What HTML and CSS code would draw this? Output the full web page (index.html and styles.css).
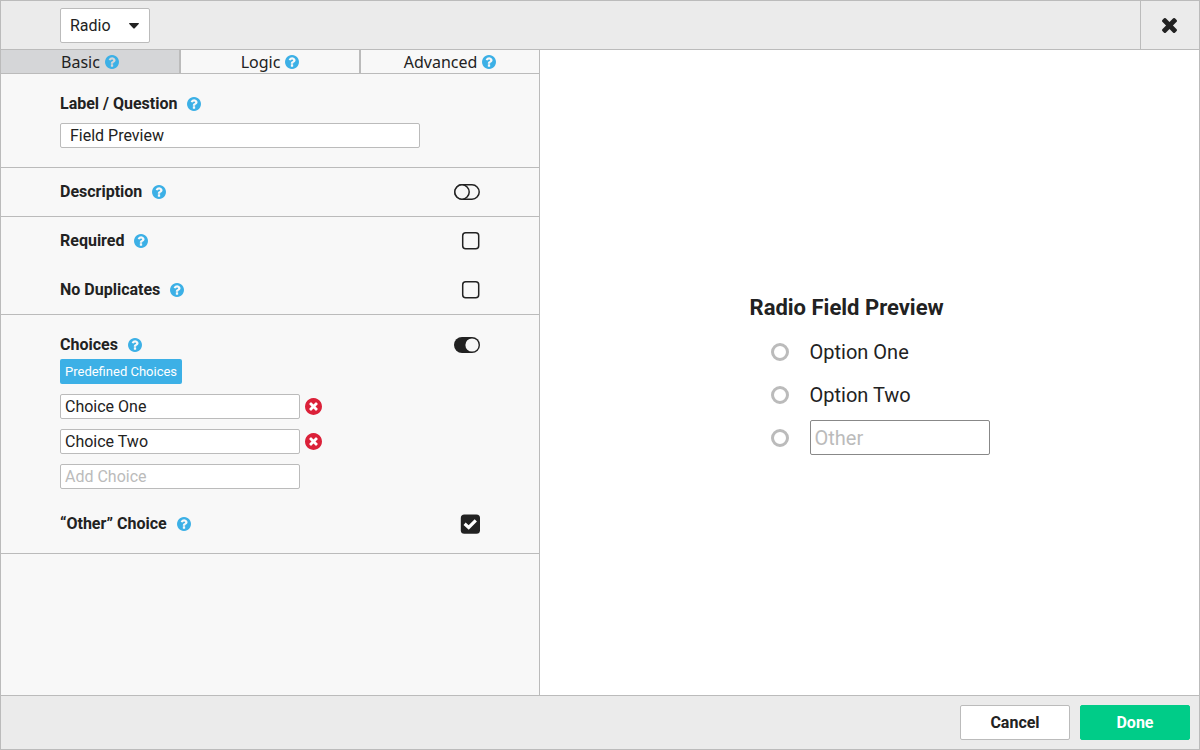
FILE: index.html
```
<!DOCTYPE html>
<html lang="en">
<head>
<meta charset="utf-8">
<title>Edit Field</title>
<meta name="viewport" content="width=device-width, initial-scale=1">
<link rel="stylesheet" href="styles.css">
</head>
<body>
<svg class="sprite" aria-hidden="true">
  <symbol id="i-help" viewBox="128 128 1536 1536"><path d="M1024 1376v-192q0-14-9-23t-23-9h-192q-14 0-23 9t-9 23v192q0 14 9 23t23 9h192q14 0 23-9t9-23zm256-672q0-88-55.5-163t-138.5-116-170-41q-243 0-371 213-15 24 8 42l132 100q7 6 19 6 16 0 25-12 53-68 86-92 34-24 86-24 48 0 85.5 26t37.5 59q0 38-20 61t-68 45q-63 28-115.5 86.5t-52.5 125.5v36q0 14 9 23t23 9h192q14 0 23-9t9-23q0-19 21.5-49.5t54.5-49.5q32-18 49-28.5t46-35 44.5-48 28-60.5 12.5-81zm384 192q0 209-103 385.5t-279.5 279.5-385.5 103-385.5-103-279.5-279.5-103-385.5 103-385.5 279.5-279.5 385.5-103 385.5 103 279.5 279.5 103 385.5z"/></symbol>
  <symbol id="i-times" viewBox="302 302 1188 1188"><path transform="translate(0 -64)" d="M1490 1322q0 40-28 68l-136 136q-28 28-68 28t-68-28l-294-294-294 294q-28 28-68 28t-68-28l-136-136q-28-28-28-68t28-68l294-294-294-294q-28-28-28-68t28-68l136-136q28-28 68-28t68 28l294 294 294-294q28-28 68-28t68 28l136 136q28 28 28 68t-28 68l-294 294 294 294q28 28 28 68z"/></symbol>
  <symbol id="i-remove" viewBox="128 128 1536 1536"><circle cx="896" cy="896" r="740" fill="#fff"/><path d="M1277 1122q0-26-19-45l-181-181 181-181q19-19 19-45 0-27-19-46l-90-90q-19-19-46-19-26 0-45 19l-181 181-181-181q-19-19-45-19-27 0-46 19l-90 90q-19 19-19 46 0 26 19 45l181 181-181 181q-19 19-19 45 0 27 19 46l90 90q19 19 46 19 26 0 45-19l181-181 181 181q19 19 45 19 27 0 46-19l90-90q19-19 19-46zm387-226q0 209-103 385.5t-279.5 279.5-385.5 103-385.5-103-279.5-279.5-103-385.5 103-385.5 279.5-279.5 385.5-103 385.5 103 279.5 279.5 103 385.5z"/></symbol>
</svg>
<div class="app">
  <header class="topbar">
    <div class="type">
      <select class="type-select" aria-label="Field type"><option>Radio</option><option>Select</option><option>Text</option></select>
      <svg class="type-caret" viewBox="0 0 10 6" aria-hidden="true"><path d="M.6 0h8.8q.9.300.3 1L5.500 5.400q-.500.400-1 0L.300 1Q-.300.300.6 0z"/></svg>
    </div>
    <button class="close" type="button" aria-label="Close"><svg class="close-icon"><use href="#i-times"/></svg></button>
  </header>

  <main class="body">
    <div class="panel">
      <nav class="tabs" role="tablist">
        <button class="tab tab-active" type="button" role="tab" aria-selected="true">Basic<svg class="help-icon"><use href="#i-help"/></svg></button>
        <button class="tab" type="button" role="tab" aria-selected="false">Logic<svg class="help-icon"><use href="#i-help"/></svg></button>
        <button class="tab" type="button" role="tab" aria-selected="false">Advanced<svg class="help-icon"><use href="#i-help"/></svg></button>
      </nav>

      <section class="section section-padded">
        <div class="row">
          <label class="label" for="question">Label / Question</label>
          <button class="help" type="button" aria-label="About label"><svg class="help-icon"><use href="#i-help"/></svg></button>
        </div>
        <input class="text text-question" id="question" type="text" value="Field Preview">
      </section>

      <section class="section">
        <div class="row row-tall">
          <label class="label" for="description">Description</label>
          <button class="help" type="button" aria-label="About description"><svg class="help-icon"><use href="#i-help"/></svg></button>
          <span class="control">
            <input class="toggle" id="description" type="checkbox">
            <svg class="toggle-art" viewBox="0 0 26 16"><rect x=".8" y=".8" width="24.400" height="14.400" rx="7.200" fill="none" stroke="#222" stroke-width="1.500"/><circle cx="8" cy="8" r="7.200" fill="#f8f8f8" stroke="#222" stroke-width="1.500"/></svg>
          </span>
        </div>
      </section>

      <section class="section">
        <div class="row row-tall">
          <label class="label" for="required">Required</label>
          <button class="help" type="button" aria-label="About required"><svg class="help-icon"><use href="#i-help"/></svg></button>
          <span class="control">
            <input class="check" id="required" type="checkbox">
            <svg class="check-art" viewBox="0 0 20 20"><rect x="2.700" y="1.700" width="16" height="16" rx="3" fill="none" stroke="#222" stroke-width="1.500"/></svg>
          </span>
        </div>
        <div class="row row-tall row-last">
          <label class="label" for="nodup">No Duplicates</label>
          <button class="help" type="button" aria-label="About no duplicates"><svg class="help-icon"><use href="#i-help"/></svg></button>
          <span class="control">
            <input class="check" id="nodup" type="checkbox">
            <svg class="check-art" viewBox="0 0 20 20"><rect x="2.700" y="1.700" width="16" height="16" rx="3" fill="none" stroke="#222" stroke-width="1.500"/></svg>
          </span>
        </div>
      </section>

      <section class="section section-padded">
        <div class="row row-choices">
          <label class="label" for="choices">Choices</label>
          <button class="help" type="button" aria-label="About choices"><svg class="help-icon"><use href="#i-help"/></svg></button>
          <span class="control">
            <input class="toggle" id="choices" type="checkbox" checked>
            <svg class="toggle-art" viewBox="0 0 26 16"><rect width="26" height="16" rx="8" fill="#222"/><circle cx="18" cy="8" r="6.600" fill="#f8f8f8"/></svg>
          </span>
        </div>
        <button class="predefined" type="button">Predefined Choices</button>
        <div class="choices">
          <div class="choice">
            <input class="text text-choice" type="text" value="Choice One" aria-label="Choice 1">
            <button class="remove" type="button" aria-label="Remove choice 1"><svg class="remove-icon"><use href="#i-remove"/></svg></button>
          </div>
          <div class="choice">
            <input class="text text-choice" type="text" value="Choice Two" aria-label="Choice 2">
            <button class="remove" type="button" aria-label="Remove choice 2"><svg class="remove-icon"><use href="#i-remove"/></svg></button>
          </div>
          <div class="choice">
            <input class="text text-choice" type="text" placeholder="Add Choice" aria-label="Add choice">
          </div>
        </div>
        <div class="row">
          <label class="label" for="other">“Other” Choice</label>
          <button class="help" type="button" aria-label="About other choice"><svg class="help-icon"><use href="#i-help"/></svg></button>
          <span class="control">
            <input class="check" id="other" type="checkbox" checked>
            <svg class="check-art" viewBox="0 0 20 20"><rect x=".8" y=".4" width="19.200" height="19.400" rx="3.600" fill="#222"/><path d="M4.600 9.800 8.700 13.500 15.800 6.400" fill="none" stroke="#fff" stroke-width="3.200"/></svg>
          </span>
        </div>
      </section>
    </div>

    <div class="preview">
      <fieldset class="field">
        <legend class="field-title">Radio Field Preview</legend>
        <div class="options">
          <div class="option"><input class="radio" id="opt1" type="radio" name="preview"><label for="opt1">Option One</label></div>
          <div class="option"><input class="radio" id="opt2" type="radio" name="preview"><label for="opt2">Option Two</label></div>
          <div class="option"><input class="radio" type="radio" name="preview" aria-label="Other"><input class="option-other" type="text" placeholder="Other" aria-label="Other value"></div>
        </div>
      </fieldset>
    </div>
  </main>

  <footer class="footer">
    <button class="btn" type="button">Cancel</button>
    <button class="btn btn-done" type="button">Done</button>
  </footer>
</div>
</body>
</html>
```
FILE: styles.css
```
* { box-sizing: border-box; }

body {
  margin: 0;
  color: #222;
  font: 16px/20px Roboto, sans-serif;
}

button, input, select {
  margin: 0;
  padding: 0;
  border: 0;
  background: none;
  color: inherit;
  font: inherit;
}

input[type="checkbox"], input[type="radio"], select { appearance: none; }
button, select, input[type="checkbox"], input[type="radio"] { cursor: pointer; }
svg { display: block; }
.sprite { display: none; }

.app {
  display: flex;
  flex-direction: column;
  min-height: 100vh;
  border: 1px solid #bbb;
  background: #fff;
}

/* Top bar */
.topbar {
  display: flex;
  align-items: stretch;
  justify-content: space-between;
  border-bottom: 1px solid #bbb;
  background: #ebebeb;
}

.type {
  display: grid;
  align-items: center;
  width: 90px;
  margin: 7px 0 6px 59px;
}

.type-select, .type-caret { grid-area: 1 / 1; }

.type-select {
  width: 100%;
  height: 35px;
  padding: 0 9px;
  border: 1px solid #bbb;
  border-radius: 2px;
  background: #fff;
}

.type-caret {
  justify-self: end;
  width: 10px;
  height: 6px;
  margin-right: 11px;
  fill: #222;
  pointer-events: none;
}

.close {
  display: grid;
  place-items: center;
  width: 59px;
  padding-right: 2px;
  border-left: 1px solid #bbb;
}

.close-icon { width: 15px; height: 15px; fill: #222; }

/* Settings panel */
.body { display: flex; flex: 1; }

.panel {
  flex: none;
  width: 45%;
  border-right: 1px solid #bbb;
  background: #f8f8f8;
}

/* The first two columns carry a 2px divider, so they are that much wider */
.tabs {
  display: grid;
  grid-template-columns: 180fr 180fr 178fr;
  border-bottom: 1px solid #bbb;
}

.tab {
  display: flex;
  align-items: center;
  justify-content: center;
  gap: 5px;
  height: 23px;
  border-right: 2px solid #bbb;
  font-family: "Noto Sans", sans-serif;
}

.tab:last-child { border-right: 0; }
.tab-active { background: #d5d6d8; }

.section { padding: 0 59px; border-bottom: 1px solid #bbb; }
.section-padded { padding-top: 20px; padding-bottom: 19px; }

.row { display: flex; align-items: center; gap: 10px; height: 20px; }
.row-tall { height: 48px; }
.row-last { height: 49px; }
.label { font-weight: 700; }
.help-icon { width: 14px; height: 14px; fill: #3cb0e6; }
.control { display: grid; place-items: center; margin-left: auto; }

.toggle, .toggle-art { grid-area: 1 / 1; width: 26px; height: 16px; }
.check, .check-art { grid-area: 1 / 1; width: 20px; height: 20px; }
.toggle-art, .check-art { pointer-events: none; }

.text {
  display: block;
  height: 25px;
  border: 1px solid #bbb;
  border-radius: 2px;
  background: #fff;
}

.text-question { width: 100%; max-width: 360px; margin-top: 9px; padding: 0 9px; }
.text-choice { width: 240px; padding: 0 4px; }
.text::placeholder, .option-other::placeholder { color: #bbb; opacity: 1; }

.predefined {
  display: block;
  height: 25px;
  margin-top: 4px;
  padding: 0 5px;
  border-radius: 2px;
  background: #3cb0e6;
  color: #fff;
  font-size: 13px;
}

.choices { display: grid; gap: 10px; margin: 10px 0 25px; }
.choice { display: flex; align-items: center; gap: 5px; }
.remove-icon { width: 17px; height: 17px; fill: #db2139; }

/* Preview */
.preview { display: grid; flex: 1; place-items: center; }
.field { margin: 0; padding: 0; border: 0; }

.field-title {
  padding: 0;
  font-size: 22px;
  font-weight: 700;
  line-height: 36px;
}

.options { display: grid; gap: 8px; padding: 8px 0 0 21px; }

.option {
  display: flex;
  align-items: center;
  gap: 21px;
  height: 35px;
  font-size: 20px;
}

.radio {
  flex: none;
  width: 18px;
  height: 18px;
  border: 3px solid #bbb;
  border-radius: 50%;
}

.option-other {
  width: 180px;
  height: 35px;
  padding: 0 4px;
  border: 1px solid #888;
  border-radius: 2px;
}

/* Footer */
.footer {
  display: flex;
  justify-content: flex-end;
  gap: 10px;
  padding: 9px;
  border-top: 1px solid #bbb;
  background: #ebebeb;
}

.btn {
  width: 110px;
  height: 35px;
  border: 1px solid #bbb;
  border-radius: 2px;
  background: #fff;
  font-weight: 700;
}

.btn-done { border-color: #00cc88; background: #00cc88; color: #fff; }
```
